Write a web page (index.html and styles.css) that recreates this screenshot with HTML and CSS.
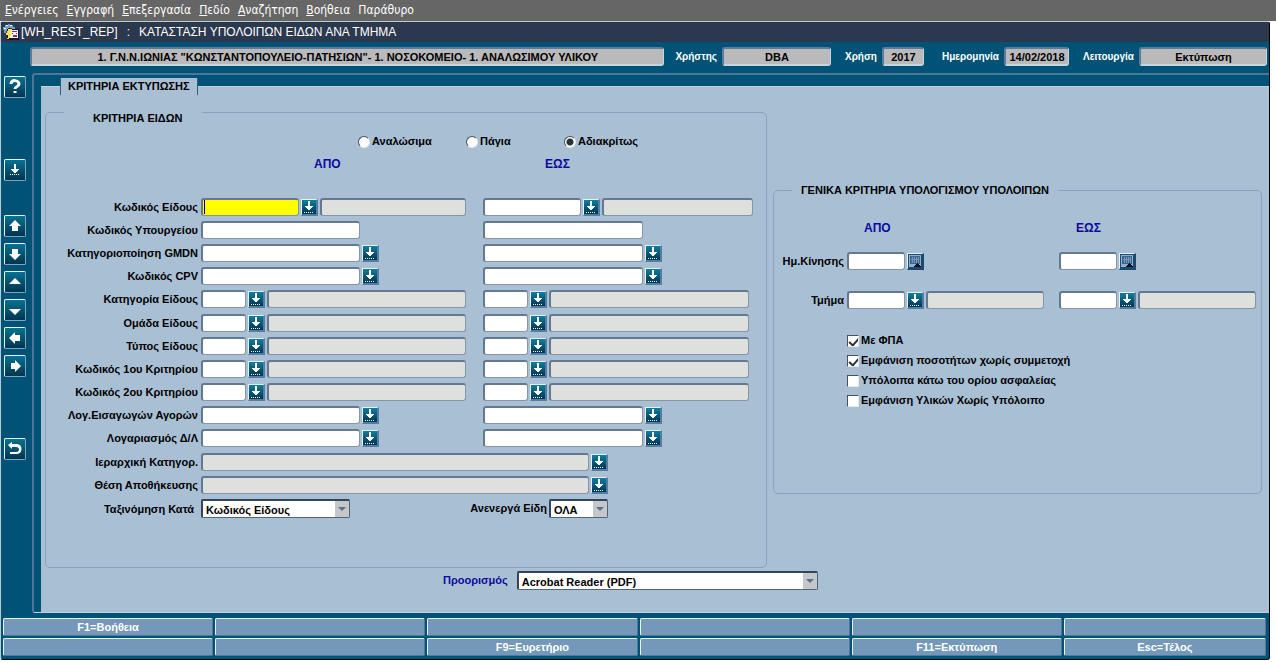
FILE: index.html
```html
<!DOCTYPE html>
<html lang="el">
<head>
<meta charset="utf-8">
<title>Κατάσταση υπολοίπων ειδών ανά τμήμα</title>
<link rel="stylesheet" href="styles.css">
</head>
<body>
<svg class="defs" aria-hidden="true">
  <defs>
    <linearGradient id="teal" x1="0" y1="0" x2="0" y2="1"><stop offset="0" stop-color="#0f7f9f"/><stop offset="1" stop-color="#003454"/></linearGradient>
    <symbol id="lov" viewBox="0 0 14 14"><rect width="14" height="14" fill="url(#teal)"/><path fill="#fff" d="M6 1h2v5h3v1h-1v1H9v1H8v1H6V9H5V8H4V7H3V6h3zM2 12h1v1H2zM4 12h1v1H4zM6 12h1v1H6zM8 12h1v1H8zM10 12h1v1h-1z"/></symbol>
    <symbol id="cal" viewBox="0 0 14 14"><rect width="14" height="14" fill="#1c4a6c"/><path fill="#8fb0d2" d="M1 1h12v12H1z"/><path fill="#3c6590" d="M2 2h10v8H2z"/><path fill="#7598be" d="M4 3h1v6H4zM6 3h1v6H6zM8 3h1v6H8zM10 3h1v6h-1zM3 5h8v1H3z"/><path fill="#001018" d="M9 9h1v1h1v1h1v1h1v1H6v-1h1v-1h1v-1h1z"/></symbol>
  </defs>
</svg>

<nav class="menubar">
  <a href="#"><u>Ε</u>νέργειες</a>
  <a href="#"><u>Ε</u>γγραφή</a>
  <a href="#"><u>Ε</u>πεξεργασία</a>
  <a href="#"><u>Π</u>εδίο</a>
  <a href="#"><u>Α</u>ναζήτηση</a>
  <a href="#"><u>Β</u>οήθεια</a>
  <a href="#">Παράθυρο</a>
</nav>

<div class="window">
  <header class="titlebar">
    <svg class="app-icon" viewBox="0 0 16 16" shape-rendering="crispEdges" aria-hidden="true">
      <path fill="#6f9fc8" d="M2 1h3V0h2v1h3v2h2v3H9V4H5v3H3v2H1V6H0V3h2z"/>
      <path fill="#fff" d="M3 1h2v1H3zM7 1h2v1H7zM1 4h2v1H1z"/>
      <path fill="#101828" d="M4 5h12v11H4z"/>
      <path fill="#f4f0f4" d="M6 6h9v8H6z"/>
      <path fill="#803070" d="M9 7h5v1H9zM9 9h1v1H9zM13 9h1v1h-1zM10 11h4v2h-4z"/>
      <path fill="#ffe04a" d="M5 5h4v1H8v2H7v1h2v1H8v2H7v2H6v1H4v-1h1v-3H3V9h1V7h1z"/>
    </svg>
    <span>[WH_REST_REP]</span><span>:</span><h1>ΚΑΤΑΣΤΑΣΗ ΥΠΟΛΟΙΠΩΝ ΕΙΔΩΝ ΑΝΑ ΤΜΗΜΑ</h1>
  </header>

  <div class="status">
    <input class="info unit" readonly aria-label="Μονάδα" value='1. Γ.Ν.Ν.ΙΩΝΙΑΣ "ΚΩΝΣΤΑΝΤΟΠΟΥΛΕΙΟ-ΠΑΤΗΣΙΩΝ"- 1. ΝΟΣΟΚΟΜΕΙΟ- 1. ΑΝΑΛΩΣΙΜΟΥ ΥΛΙΚΟΥ'>
    <label class="near" for="user">Χρήστης</label><input class="info user" id="user" readonly value="DBA">
    <label for="year">Χρήση</label><input class="info year" id="year" readonly value="2017">
    <label class="far" for="date">Ημερομηνία</label><input class="info date" id="date" readonly value="14/02/2018">
    <label for="mode">Λειτουργία</label><input class="info mode" id="mode" readonly value="Εκτύπωση">
  </div>

  <div class="body">
    <aside class="tools">
      <div class="tool-group">
        <button class="tool" aria-label="Βοήθεια"><svg viewBox="0 0 20 20"><path d="M6 7C6 2 14 3 14 7c0 3-4 2-4 5M10 14v2" fill="none" stroke="#fff" stroke-width="3"/></svg></button>
      </div>
      <div class="tool-group">
        <button class="tool" aria-label="Λίστα τιμών"><svg viewBox="0 0 20 20" shape-rendering="crispEdges"><path d="M9 4h2v5h3v1h-1v1h-1v1h-1v1H9v-1H8v-1H7v-1H6V9h3zM5 14h1v1H5zM7 14h1v1H7zM9 14h1v1H9zM11 14h1v1h-1zM13 14h1v1h-1z"/></svg></button>
      </div>
      <div class="tool-group">
        <button class="tool" aria-label="Προηγούμενη ομάδα"><svg viewBox="0 0 20 20"><path d="M10 4l6 6h-3v5H7v-5H4z"/></svg></button>
        <button class="tool" aria-label="Επόμενη ομάδα"><svg viewBox="0 0 20 20"><path d="M10 16l6-6h-3V5H7v5H4z"/></svg></button>
        <button class="tool" aria-label="Προηγούμενη εγγραφή"><svg viewBox="0 0 20 20"><path d="M10 6l6 6H4z"/></svg></button>
        <button class="tool" aria-label="Επόμενη εγγραφή"><svg viewBox="0 0 20 20"><path d="M10 15l6-6H4z"/></svg></button>
        <button class="tool" aria-label="Προηγούμενο πεδίο"><svg viewBox="0 0 20 20"><path d="M4 10l6-6v3h5v6h-5v3z"/></svg></button>
        <button class="tool" aria-label="Επόμενο πεδίο"><svg viewBox="0 0 20 20"><path d="M16 10l-6-6v3H6v6h4v3z"/></svg></button>
      </div>
      <div class="tool-group">
        <button class="tool" aria-label="Έξοδος"><svg viewBox="0 0 20 20"><path d="M3 6l4-3v2h5c6 0 6 10 0 10H5v-2h6c4 0 4-5 0-5H7v2z"/></svg></button>
      </div>
    </aside>

    <main class="frame">
      <button class="tab">ΚΡΙΤΗΡΙΑ ΕΚΤΥΠΩΣΗΣ</button>
      <form class="panel">
        <div class="columns">
          <fieldset class="items">
            <legend>ΚΡΙΤΗΡΙΑ ΕΙΔΩΝ</legend>
            <div class="radios">
              <label class="check"><input type="radio" name="kind">Αναλώσιμα</label>
              <label class="check"><input type="radio" name="kind">Πάγια</label>
              <label class="check"><input type="radio" name="kind" checked>Αδιακρίτως</label>
            </div>
            <div class="heads"><span>ΑΠΟ</span><span>ΕΩΣ</span></div>

            <div class="rows">
              <div class="row">
                <label for="code">Κωδικός Είδους</label>
                <div class="range"><input class="field code active" id="code"><button type="button" class="lov" aria-label="Επιλογή"><svg><use href="#lov"/></svg></button><input class="field desc" readonly aria-label="Περιγραφή από"></div>
                <div class="range wide"><input class="field code" aria-label="Κωδικός Είδους έως"><button type="button" class="lov" aria-label="Επιλογή"><svg><use href="#lov"/></svg></button><input class="field desc" readonly aria-label="Περιγραφή έως"></div>
              </div>
              <div class="row">
                <label for="ministry">Κωδικός Υπουργείου</label>
                <div class="range"><input class="field long" id="ministry"></div>
                <div class="range"><input class="field long" aria-label="Κωδικός Υπουργείου έως"></div>
              </div>
              <div class="row">
                <label for="gmdn">Κατηγοριοποίηση GMDN</label>
                <div class="range"><input class="field long" id="gmdn"><button type="button" class="lov" aria-label="Επιλογή"><svg><use href="#lov"/></svg></button></div>
                <div class="range"><input class="field long" aria-label="GMDN έως"><button type="button" class="lov" aria-label="Επιλογή"><svg><use href="#lov"/></svg></button></div>
              </div>
              <div class="row">
                <label for="cpv">Κωδικός CPV</label>
                <div class="range"><input class="field long" id="cpv"><button type="button" class="lov" aria-label="Επιλογή"><svg><use href="#lov"/></svg></button></div>
                <div class="range"><input class="field long" aria-label="CPV έως"><button type="button" class="lov" aria-label="Επιλογή"><svg><use href="#lov"/></svg></button></div>
              </div>
              <div class="row">
                <label for="category">Κατηγορία Είδους</label>
                <div class="range"><input class="field short" id="category"><button type="button" class="lov" aria-label="Επιλογή"><svg><use href="#lov"/></svg></button><input class="field desc" readonly aria-label="Περιγραφή από"></div>
                <div class="range"><input class="field short" aria-label="Κατηγορία έως"><button type="button" class="lov" aria-label="Επιλογή"><svg><use href="#lov"/></svg></button><input class="field desc" readonly aria-label="Περιγραφή έως"></div>
              </div>
            </div>

            <div class="rows">
              <div class="row">
                <label for="group">Ομάδα Είδους</label>
                <div class="range"><input class="field short" id="group"><button type="button" class="lov" aria-label="Επιλογή"><svg><use href="#lov"/></svg></button><input class="field desc" readonly aria-label="Περιγραφή από"></div>
                <div class="range"><input class="field short" aria-label="Ομάδα έως"><button type="button" class="lov" aria-label="Επιλογή"><svg><use href="#lov"/></svg></button><input class="field desc" readonly aria-label="Περιγραφή έως"></div>
              </div>
              <div class="row">
                <label for="type">Τύπος Είδους</label>
                <div class="range"><input class="field short" id="type"><button type="button" class="lov" aria-label="Επιλογή"><svg><use href="#lov"/></svg></button><input class="field desc" readonly aria-label="Περιγραφή από"></div>
                <div class="range"><input class="field short" aria-label="Τύπος έως"><button type="button" class="lov" aria-label="Επιλογή"><svg><use href="#lov"/></svg></button><input class="field desc" readonly aria-label="Περιγραφή έως"></div>
              </div>
              <div class="row">
                <label for="crit1">Κωδικός 1ου Κριτηρίου</label>
                <div class="range"><input class="field short" id="crit1"><button type="button" class="lov" aria-label="Επιλογή"><svg><use href="#lov"/></svg></button><input class="field desc" readonly aria-label="Περιγραφή από"></div>
                <div class="range"><input class="field short" aria-label="1ο Κριτήριο έως"><button type="button" class="lov" aria-label="Επιλογή"><svg><use href="#lov"/></svg></button><input class="field desc" readonly aria-label="Περιγραφή έως"></div>
              </div>
              <div class="row">
                <label for="crit2">Κωδικός 2ου Κριτηρίου</label>
                <div class="range"><input class="field short" id="crit2"><button type="button" class="lov" aria-label="Επιλογή"><svg><use href="#lov"/></svg></button><input class="field desc" readonly aria-label="Περιγραφή από"></div>
                <div class="range"><input class="field short" aria-label="2ο Κριτήριο έως"><button type="button" class="lov" aria-label="Επιλογή"><svg><use href="#lov"/></svg></button><input class="field desc" readonly aria-label="Περιγραφή έως"></div>
              </div>
              <div class="row">
                <label for="purchases">Λογ.Εισαγωγών Αγορών</label>
                <div class="range"><input class="field long" id="purchases"><button type="button" class="lov" aria-label="Επιλογή"><svg><use href="#lov"/></svg></button></div>
                <div class="range"><input class="field long" aria-label="Λογαριασμός αγορών έως"><button type="button" class="lov" aria-label="Επιλογή"><svg><use href="#lov"/></svg></button></div>
              </div>
              <div class="row">
                <label for="account">Λογαριασμός Δ/Λ</label>
                <div class="range"><input class="field long" id="account"><button type="button" class="lov" aria-label="Επιλογή"><svg><use href="#lov"/></svg></button></div>
                <div class="range"><input class="field long" aria-label="Λογαριασμός Δ/Λ έως"><button type="button" class="lov" aria-label="Επιλογή"><svg><use href="#lov"/></svg></button></div>
              </div>
            </div>

            <div class="rows">
              <div class="row">
                <label for="tree">Ιεραρχική Κατηγορ.</label>
                <div class="range span"><input class="field desc" id="tree" readonly><button type="button" class="lov" aria-label="Επιλογή"><svg><use href="#lov"/></svg></button></div>
              </div>
              <div class="row">
                <label for="place">Θέση Αποθήκευσης</label>
                <div class="range span"><input class="field desc" id="place" readonly><button type="button" class="lov" aria-label="Επιλογή"><svg><use href="#lov"/></svg></button></div>
              </div>
              <div class="row sorting">
                <label for="sort">Ταξινόμηση Κατά</label>
                <div class="range span">
                  <span class="select sort"><select id="sort"><option>Κωδικός Είδους</option></select></span>
                  <label class="inactive" for="inactive">Ανενεργά Είδη</label>
                  <span class="select all"><select id="inactive"><option>ΟΛΑ</option></select></span>
                </div>
              </div>
            </div>
          </fieldset>

          <fieldset class="general">
            <legend>ΓΕΝΙΚΑ ΚΡΙΤΗΡΙΑ ΥΠΟΛΟΓΙΣΜΟΥ ΥΠΟΛΟΙΠΩΝ</legend>
            <div class="row heading"><span></span><span>ΑΠΟ</span><span>ΕΩΣ</span></div>
            <div class="row">
              <label for="move">Ημ.Κίνησης</label>
              <div class="range"><input class="field medium" id="move"><button type="button" class="lov calendar" aria-label="Ημερολόγιο"><svg><use href="#cal"/></svg></button></div>
              <div class="range"><input class="field medium" aria-label="Ημ.Κίνησης έως"><button type="button" class="lov calendar" aria-label="Ημερολόγιο"><svg><use href="#cal"/></svg></button></div>
            </div>
            <div class="row">
              <label for="dept">Τμήμα</label>
              <div class="range"><input class="field medium" id="dept"><button type="button" class="lov" aria-label="Επιλογή"><svg><use href="#lov"/></svg></button><input class="field desc" readonly aria-label="Περιγραφή από"></div>
              <div class="range"><input class="field medium" aria-label="Τμήμα έως"><button type="button" class="lov" aria-label="Επιλογή"><svg><use href="#lov"/></svg></button><input class="field desc" readonly aria-label="Περιγραφή έως"></div>
            </div>
            <div class="checks">
              <label class="check"><input type="checkbox" checked>Με ΦΠΑ</label>
              <label class="check"><input type="checkbox" checked>Εμφάνιση ποσοτήτων χωρίς συμμετοχή</label>
              <label class="check"><input type="checkbox">Υπόλοιπα κάτω του ορίου ασφαλείας</label>
              <label class="check"><input type="checkbox">Εμφάνιση Υλικών Χωρίς Υπόλοιπο</label>
            </div>
          </fieldset>
        </div>
        <div class="target">
          <label for="target">Προορισμός</label>
          <span class="select"><select id="target"><option>Acrobat Reader (PDF)</option></select></span>
        </div>
      </form>
    </main>
  </div>

  <footer class="keys">
    <button>F1=Βοήθεια</button><button aria-label="F2"></button><button aria-label="F3"></button><button aria-label="F4"></button><button aria-label="F5"></button><button aria-label="F6"></button>
    <button aria-label="F7"></button><button aria-label="F8"></button><button>F9=Ευρετήριο</button><button aria-label="F10"></button><button>F11=Εκτύπωση</button><button>Esc=Τέλος</button>
  </footer>
</div>
</body>
</html>
```
FILE: styles.css
```css
* { box-sizing: border-box; }

body {
  margin: 0;
  min-height: 100vh;
  display: flex;
  flex-direction: column;
  background: #fff;
  color: #000;
  font: bold 11px/13px "Liberation Sans", Arial, sans-serif;
}

button, input, select { font: inherit; color: inherit; margin: 0; }
.defs { position: absolute; width: 0; height: 0; }

/* Menu and title */
.menubar {
  display: flex;
  gap: 8px;
  padding: 2px 5px 3px;
  background: #666;
  font: 12px/16px "DejaVu Sans Condensed", "DejaVu Sans", sans-serif;
}
.menubar a { color: #fff; text-decoration: none; }

.window {
  flex: 1;
  display: flex;
  flex-direction: column;
  margin: 0 6px 3px 0;
  border: 1px solid #b9ccd0;
  border-right-color: #000;
  border-bottom-color: #000;
  border-radius: 3px;
  background: #005277;
}
.titlebar {
  display: flex;
  align-items: center;
  gap: 9px;
  height: 20px;
  padding-left: 2px;
  background: #2b384e;
  color: #fff;
  font: 12px/20px "Liberation Sans", Arial, sans-serif;
}
.titlebar h1 { margin: 0; font: inherit; }
.app-icon { width: 16px; height: 16px; margin-right: -7px; }

/* Session information */
.status {
  display: flex;
  align-items: center;
  padding: 5px 2px 7px 29px;
  color: #fff;
}
.status label { font-size: 10px; margin: 0 5px 0 14px; }
.status .near { margin-left: 11px; }
.status .far { margin-left: 18px; }
.info {
  height: 19px;
  padding: 0;
  border: 2px solid #5d7b9d;
  border-right: 1px solid #c5d5e0;
  border-bottom-color: #c5d5e0;
  border-radius: 3px;
  background: #bababa;
  color: #000;
  text-align: center;
}
.unit { flex: 1; min-width: 0; }
.user { width: 109px; }
.year { width: 42px; }
.date { width: 65px; }
.mode { width: 128px; }

.body { flex: 1; display: flex; }

/* Tool column */
.tools { width: 31px; padding: 3px 0 0 3px; }
.tool-group { display: flex; flex-direction: column; gap: 6px; margin-bottom: 61px; }
.tool-group:nth-child(2) { margin-bottom: 34px; }
.tool {
  width: 22px;
  height: 22px;
  padding: 0;
  border: 1px solid #e4f4f8;
  border-right-color: #7fa6bd;
  border-bottom-color: #7fa6bd;
  border-radius: 2px;
  background: linear-gradient(#087292, #003450);
}
.tool svg { display: block; width: 20px; height: 20px; fill: #fff; }

/* Work area */
.frame {
  flex: 1;
  min-width: 0;
  display: flex;
  flex-direction: column;
  padding: 3px 0 0 7px;
  border: 2px solid #4d7798;
  border-right: 0;
  border-bottom: 1px solid #c3d3de;
  border-radius: 3px 0 0 3px;
}
.tab {
  position: relative;
  align-self: flex-start;
  margin: 0 0 -9px 19px;
  height: 17px;
  padding: 0 7px;
  border: 0;
  border-right: 1px solid #365b77;
  border-left: 1px solid #365b77;
  background: #a9bfd3;
}
.panel {
  flex: 1;
  padding: 13px 7px 20px 4px;
  border-top: 1px solid #c1d1de;
  background: #a9bfd3;
}
.columns { display: grid; grid-template-columns: 722fr 489fr; gap: 6px; align-items: start; }
fieldset {
  min-width: 0;
  margin: 0;
  padding: 0;
  border: 1px solid #8ba3b9;
  border-radius: 5px;
}
legend { margin-left: 18px; padding: 0 9px; }
.items { padding: 10px 18px 50px 0; }
.items legend { padding: 12px 20px 0 29px; }
.general { margin-top: 84px; padding: 0 5px 86px 0; }

.check { display: flex; align-items: center; gap: 2px; }
.check input {
  appearance: none;
  width: 12px;
  height: 12px;
  border: 1px solid #e6eaec;
  border-top-color: #44525e;
  border-left-color: #44525e;
  background: #fff;
}
.check input[type="radio"] { border-radius: 50%; }
.check input[type="radio"]:checked { background: radial-gradient(circle, #26323c 3px, #fff 4px); }
.check input[type="checkbox"] { overflow: hidden; }
.check input[type="checkbox"]:checked::before {
  content: "";
  display: block;
  width: 4px;
  height: 8px;
  margin: 0 0 2px 3px;
  border: solid #26323c;
  border-width: 0 2px 2px 0;
  transform: rotate(42deg);
}
.radios { display: grid; grid-template-columns: 108px 98px auto; padding-left: 312px; }
.heads {
  display: grid;
  grid-template-columns: 231px auto;
  padding: 10px 0 27px 268px;
  color: #0a0aa0;
  font-size: 12px;
}

.rows { display: grid; gap: 5px; margin-bottom: 6px; }
.rows:last-child { margin-bottom: 0; }
.row {
  display: grid;
  grid-template-columns: 152px 1fr 1fr;
  align-items: center;
  height: 18px;
}
.row > label { padding-top: 1px; text-align: right; }
.row.sorting > label { padding-right: 4px; }
.items .row > .range { margin-left: 3px; }
.items .row > .range + .range { margin-left: 17px; margin-right: -1px; }
.items .row { grid-template-columns: 152px 268fr 282fr; }
.items .row > .range.wide { margin-right: -5px; }
.range { display: flex; align-items: center; gap: 2px; min-width: 0; }
.items .row > .range.span { grid-column: span 2; width: 407px; max-width: 100%; }

.field {
  height: 18px;
  min-width: 0;
  padding: 0 2px;
  border: 2px solid #647892;
  border-right: 1px solid #8796a6;
  border-bottom: 1px solid #8796a6;
  border-radius: 3px;
  background: #fff;
}
.code { width: 98px; }
.active { background: linear-gradient(#000, #000) 1px 0 / 1px 14px no-repeat #ff0; }
.short { width: 45px; }
.medium { width: 58px; }
.long { width: 60%; }
.desc { flex: 1; background: #dde0dd; }
.lov {
  flex: none;
  width: 17px;
  height: 17px;
  padding: 0;
  border: 1px solid #e8f2f6;
  border-right: 2px solid #537da3;
  border-bottom: 2px solid #537da3;
  background: #00435f;
}
.calendar { border-right-color: #1c4a6c; border-bottom-color: #1c4a6c; }
.lov svg { display: block; width: 14px; height: 14px; shape-rendering: crispEdges; }

/* Drop-downs */
.select { position: relative; display: inline-flex; }
.select select {
  appearance: none;
  width: 100%;
  height: 19px;
  padding: 2px 16px 0 3px;
  border: 2px solid #354559;
  border-right: 1px solid #52647a;
  border-bottom: 1px solid #52647a;
  border-radius: 2px;
  background: linear-gradient(#c4c8cb, #c4c8cb) right / 14px 100% no-repeat #fff;
}
.select::after {
  content: "";
  position: absolute;
  top: 8px;
  right: 4px;
  border: 4px solid transparent;
  border-top-color: #5d6f85;
  border-bottom: 0;
  pointer-events: none;
}
.sort { width: 149px; }
.inactive { margin-left: auto; }
.all { width: 59px; }

/* General criteria */
.general .row { grid-template-columns: 70px 1fr 1fr; column-gap: 3px; margin-bottom: 21px; }
.general .range + .range { margin-left: 6px; margin-right: -6px; }
.general .row > .range { padding-right: 6px; }
.general .heading { margin: 22px 0 15px; color: #0a0aa0; font-size: 12px; text-align: left; }
.heading span { padding-left: 17px; }
.heading span:last-child { padding-left: 23px; }
.checks { display: grid; gap: 7px; padding: 4px 0 0 73px; }

.target {
  display: flex;
  align-items: center;
  gap: 9px;
  padding: 3px 0 0 398px;
}
.target label { color: #0a0aa0; }
.target .select { width: 301px; }

/* Function keys */
.keys {
  display: grid;
  grid-template-columns: repeat(5, 210fr) 202fr;
  gap: 2px;
  padding: 5px 3px 3px 2px;
}
.keys button {
  height: 18px;
  padding: 0;
  border: 1px solid #e5f3f5;
  border-right-color: #54789a;
  border-bottom-color: #54789a;
  border-radius: 2px;
  background: #7398b9;
  color: #fff;
}
```
